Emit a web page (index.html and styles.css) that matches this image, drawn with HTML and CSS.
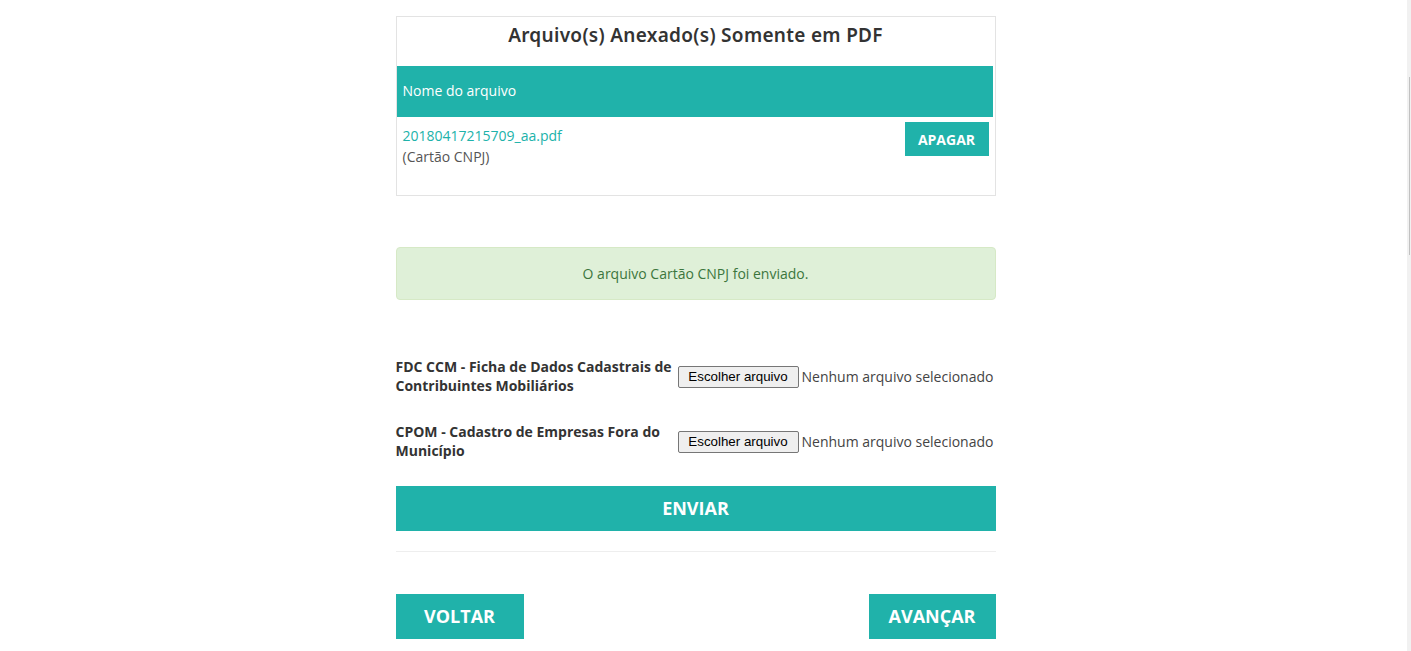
FILE: index.html
```html
<!DOCTYPE html>
<html lang="pt-BR">
<head>
<meta charset="utf-8">
<title>Arquivos</title>
<link rel="stylesheet" href="styles.css">
</head>
<body>
<main class="page">
  <section class="files">
    <h2 class="files-title">Arquivo(s) Anexado(s) Somente em PDF</h2>
    <div class="files-head">Nome do arquivo</div>
    <div class="files-row">
      <div class="file-info">
        <a class="file-link" href="#">20180417215709_aa.pdf</a>
        <span class="file-type">(Cartão CNPJ)</span>
      </div>
      <button class="btn btn-small" type="button">APAGAR</button>
    </div>
  </section>

  <div class="alert">O arquivo Cartão CNPJ foi enviado.</div>

  <form class="upload">
    <div class="field">
      <label class="field-label">FDC CCM - Ficha de Dados Cadastrais de Contribuintes Mobiliários</label>
      <div class="file-input"><span class="file-btn">Escolher arquivo</span><span class="file-none">Nenhum arquivo selecionado</span></div>
    </div>
    <div class="field">
      <label class="field-label">CPOM - Cadastro de Empresas Fora do Município</label>
      <div class="file-input"><span class="file-btn">Escolher arquivo</span><span class="file-none">Nenhum arquivo selecionado</span></div>
    </div>
    <button class="btn btn-block" type="button">ENVIAR</button>
  </form>

  <hr class="divider">

  <nav class="nav">
    <button class="btn btn-nav" type="button">VOLTAR</button>
    <button class="btn btn-nav" type="button">AVANÇAR</button>
  </nav>
</main>
<div class="scrollbar"><div class="scrollbar-thumb"></div></div>
</body>
</html>
```
FILE: styles.css
```css
* { box-sizing: border-box; }
html, body { margin: 0; padding: 0; background: #fff; }
body {
  font-family: "Open Sans", "Liberation Sans", sans-serif;
  font-size: 14px;
  color: #333;
}
.page {
  width: 600px;
  margin: 0 auto;
  padding-top: 16px;
  position: relative;
  left: -10px;
}
.files {
  border: 1px solid #e3e3e3;
  height: 180px;
}
.files-title {
  margin: 0;
  height: 49px;
  display: flex;
  align-items: flex-start;
  justify-content: center;
  font-family: "Noto Sans", "Open Sans", sans-serif;
  font-weight: 600;
  font-size: 19px;
  letter-spacing: 0.3px;
  line-height: 26px;
  color: #333;
  padding-top: 5px;
}
.files-head {
  background: #20b2aa;
  color: #fff;
  height: 51px;
  margin-right: 2px;
  display: flex;
  align-items: center;
  padding-left: 6px;
  padding-bottom: 2px;
  font-size: 14px;
}
.files-row {
  display: flex;
  justify-content: space-between;
  align-items: flex-start;
  padding: 5px 6px 0 6px;
}
.file-info {
  display: flex;
  flex-direction: column;
  line-height: 21px;
  padding-top: 3px;
}
.file-link { color: #20b2aa; text-decoration: none; }
.file-type { color: #555; }
.btn {
  background: #20b2aa;
  color: #fff;
  border: 0;
  font-family: "Open Sans", "Liberation Sans", sans-serif;
  font-weight: 700;
  cursor: pointer;
  padding: 0;
}
.btn-small {
  width: 84px;
  height: 34px;
  font-size: 14px;
}
.alert {
  margin-top: 51px;
  height: 53px;
  background: #dff0d8;
  border: 1px solid #d6e9c6;
  border-radius: 4px;
  color: #3c763d;
  display: flex;
  align-items: center;
  justify-content: center;
  font-size: 14px;
}
.upload {
  margin-top: 44px;
  display: flex;
  flex-direction: column;
}
.field {
  display: flex;
  align-items: center;
  height: 65px;
}
.field-label {
  width: 282px;
  font-weight: 700;
  line-height: 19px;
  color: #333;
  padding-bottom: 2px;
}
.file-input {
  display: flex;
  align-items: center;
}
.file-btn {
  font-family: "Liberation Sans", Arial, sans-serif;
  font-size: 13.33px;
  color: #000;
  background: #efefef;
  border: 1px solid #767676;
  border-radius: 2px;
  height: 22px;
  width: 121px;
  display: flex;
  align-items: center;
  justify-content: center;
  margin-right: 3px;
}
.file-none { color: #444; }
.btn-block {
  margin-top: 12px;
  height: 45px;
  width: 100%;
  font-size: 18px;
  padding-bottom: 2px;
}
.divider {
  border: 0;
  border-top: 1px solid #eee;
  margin: 20px 0 0;
}
.nav {
  display: flex;
  justify-content: space-between;
  margin-top: 42px;
}
.btn-nav {
  height: 45px;
  font-size: 18px;
  padding: 0 20px 2px;
}
.btn-nav:first-child { width: 128px; }
.btn-nav:last-child { width: 127px; }
.scrollbar {
  position: fixed;
  top: 0;
  right: 0;
  width: 4px;
  height: 100%;
  background: #f1f1f1;
}
.scrollbar-thumb {
  position: absolute;
  top: 77px;
  left: 2px;
  width: 1px;
  height: 178px;
  background: #c1c1c1;
}
```
